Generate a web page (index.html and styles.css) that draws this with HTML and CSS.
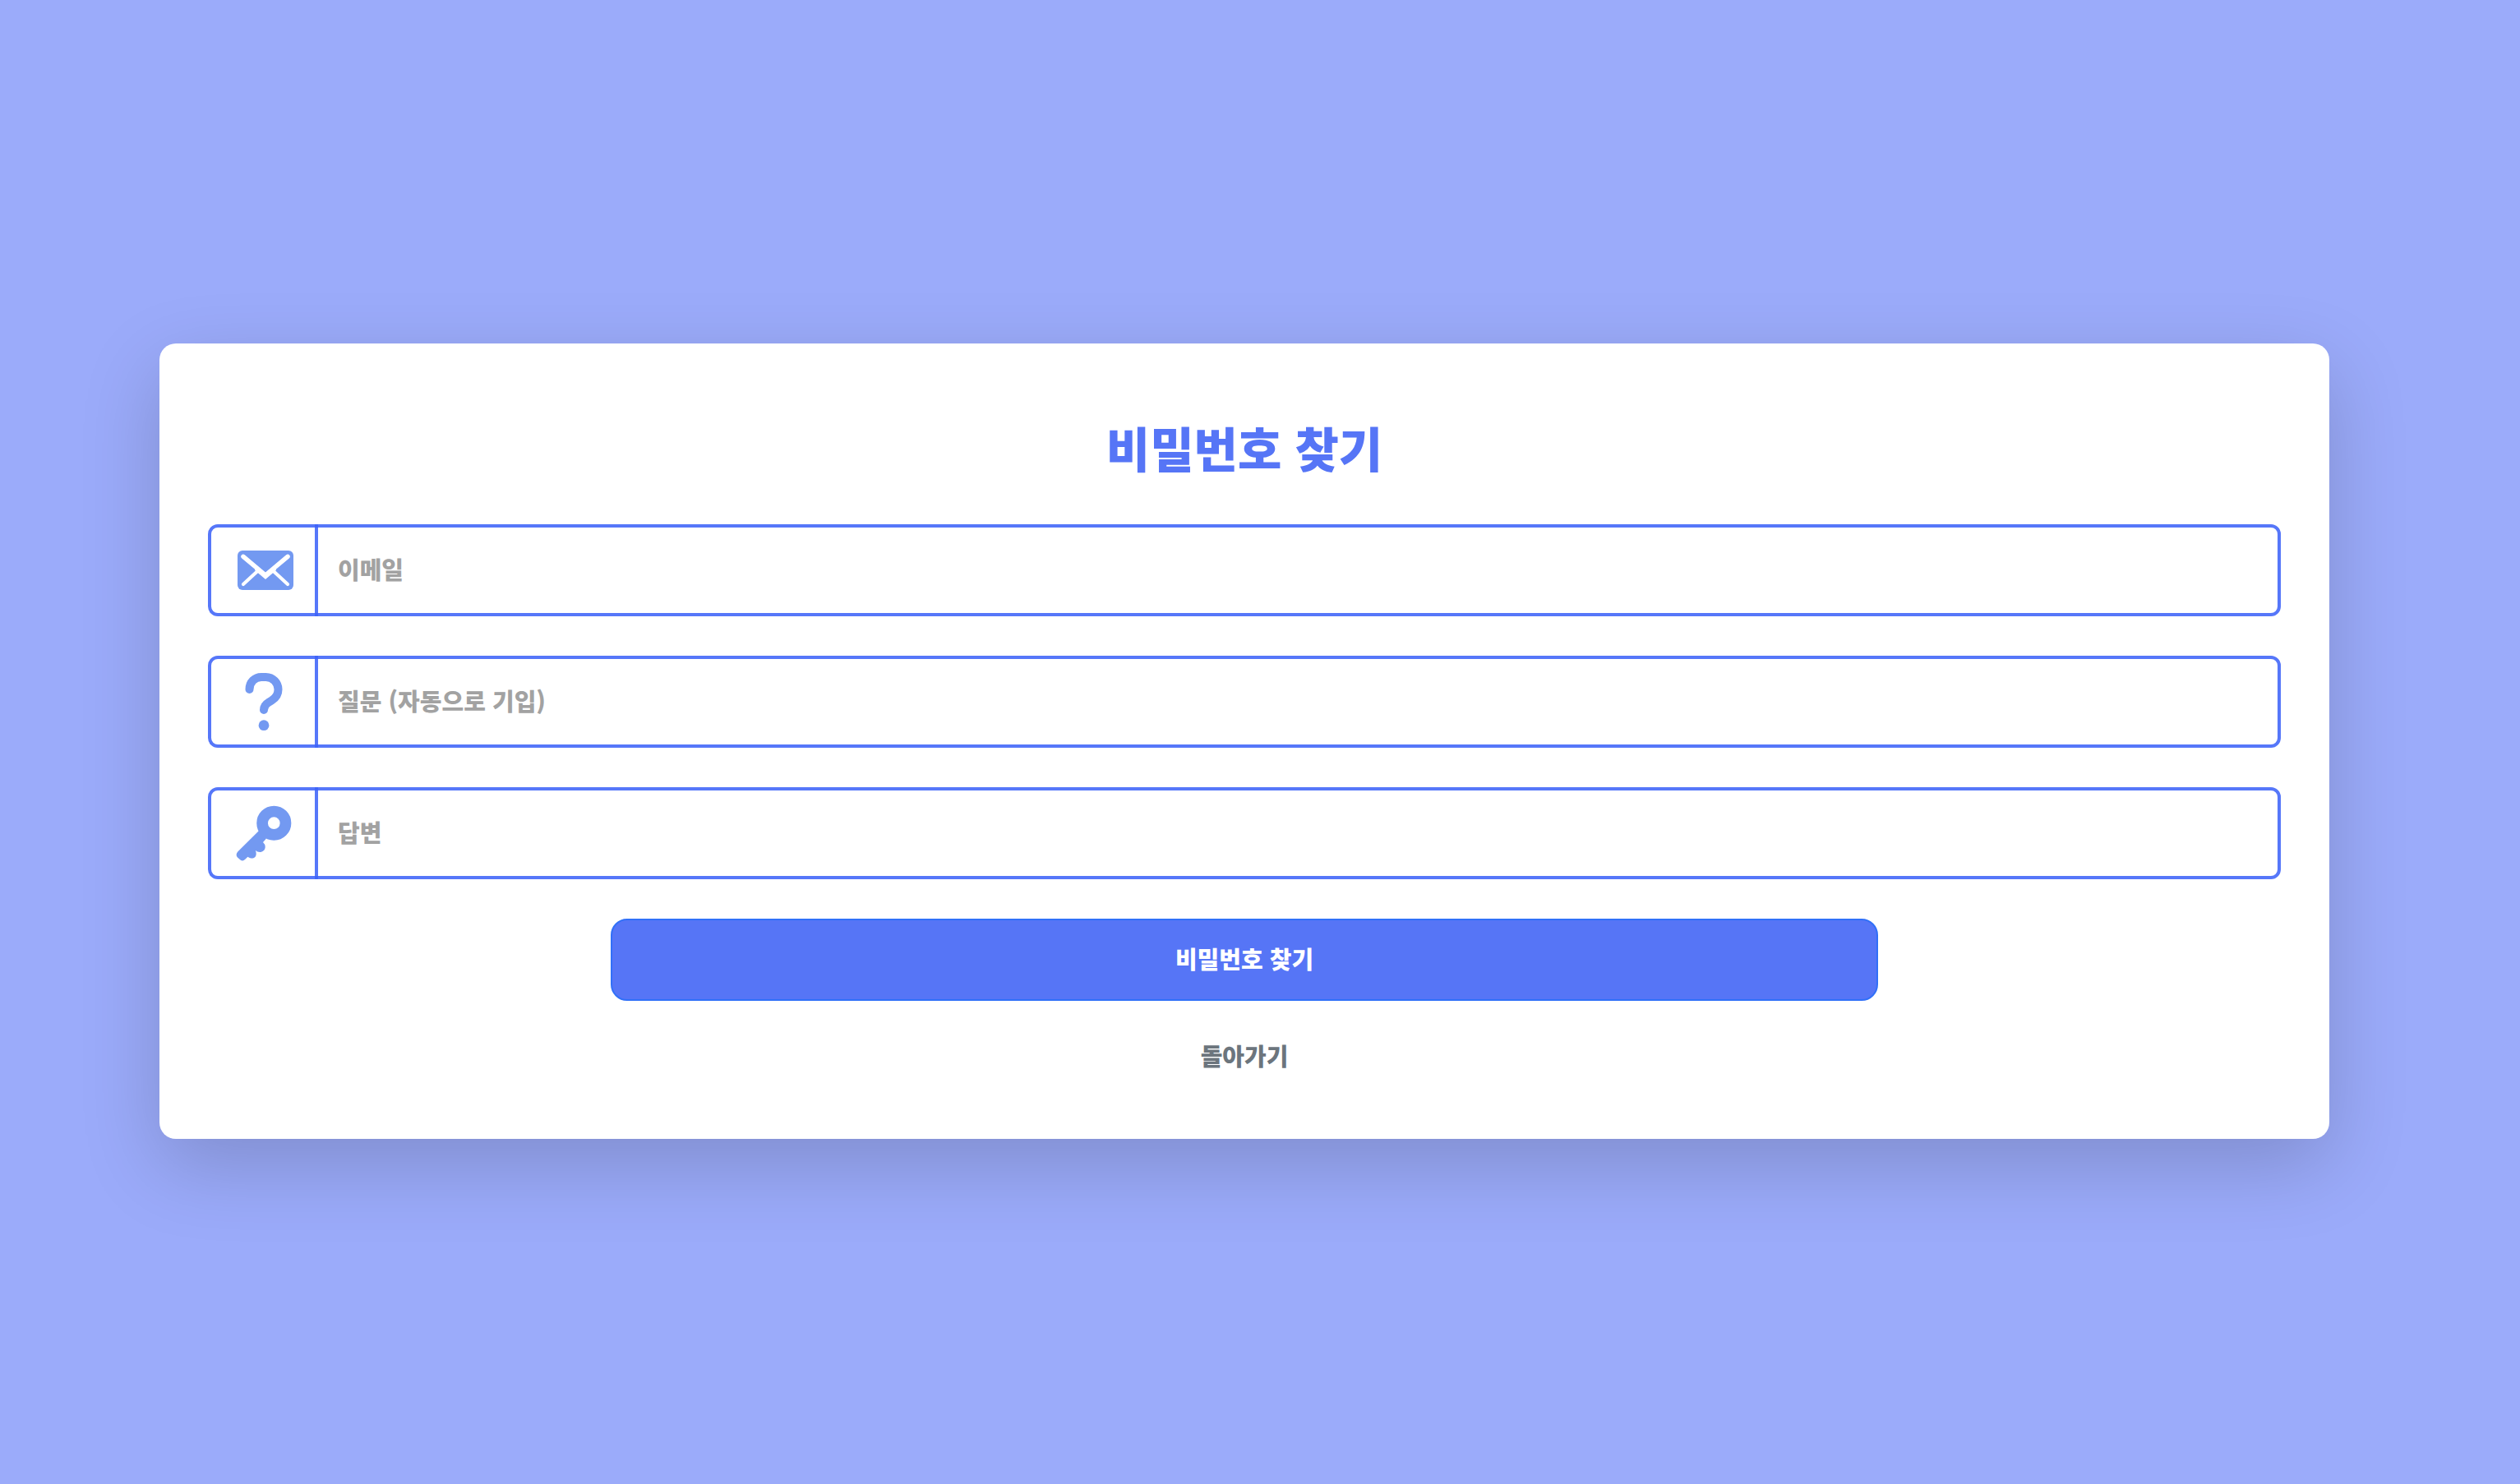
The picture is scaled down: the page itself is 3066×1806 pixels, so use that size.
FILE: index.html
```html
<!DOCTYPE html>
<html lang="ko">
<head>
  <meta charset="utf-8">
  <meta name="viewport" content="width=device-width, initial-scale=1">
  <title>비밀번호 찾기</title>
  <link rel="stylesheet" href="styles.css">
</head>
<body>
  <main class="card">
    <h1 class="title">비밀번호 찾기</h1>
    <form class="form">
      <div class="field">
        <label class="field-icon" for="email" aria-label="이메일">
          <svg class="icon" viewBox="0 0 80 80" aria-hidden="true">
            <rect x="9" y="16" width="68" height="48" rx="6" fill="currentColor"/>
            <g fill="none" stroke="#fff" stroke-linecap="round">
              <path d="M16 23.300 L43 46 L70 23.300" stroke-width="5.500" stroke-linejoin="miter"/>
              <path d="M33 39 L43 47.500 L53 39" stroke-width="5.500" stroke-linejoin="miter"/>
              <path d="M16 57 L35 39.500 M70 57 L51 39.500" stroke-width="4.200"/>
            </g>
          </svg>
        </label>
        <input class="field-input" id="email" type="email" placeholder="이메일">
      </div>
      <div class="field">
        <label class="field-icon" for="question" aria-label="질문">
          <svg class="icon" viewBox="0 0 80 80" aria-hidden="true">
            <path d="M23.500 25 C23.500 16 30 10 38 10 H43.500 C52 10 58.500 17 58.500 25 C58.500 31 55.500 35.500 50.500 38.500 L46.500 41 C43 43 41 46 41 50" fill="none" stroke="currentColor" stroke-width="10" stroke-linecap="round"/>
            <circle cx="41" cy="68.700" r="6.400" fill="currentColor"/>
          </svg>
        </label>
        <input class="field-input" id="question" type="text" placeholder="질문 (자동으로 기입)" readonly>
      </div>
      <div class="field">
        <label class="field-icon" for="answer" aria-label="답변">
          <svg class="icon" viewBox="0 0 80 80" aria-hidden="true">
            <circle cx="53.300" cy="27.700" r="14.200" fill="none" stroke="currentColor" stroke-width="13.700"/>
            <path d="M35 37 L9.500 62.300 Q6 66 9 69.500 L12.500 72.500 Q15.500 74.500 18 72 L21.500 68.700 C25 71.500 31.700 71.500 31.700 65 Q31.700 62.500 30.800 60.800 C35 65 42.700 63 42.700 56.500 Q42.700 53.500 40 51 L44 46.500 Z" fill="currentColor"/>
          </svg>
        </label>
        <input class="field-input" id="answer" type="text" placeholder="답변">
      </div>
      <button class="submit" type="submit">비밀번호 찾기</button>
    </form>
    <a class="back" href="#">돌아가기</a>
  </main>
</body>
</html>
```
FILE: styles.css
```css
* {
  box-sizing: border-box;
}

body {
  margin: 0;
  min-height: 100vh;
  padding: 0 38px 2px 0;
  display: flex;
  align-items: center;
  justify-content: center;
  background: #9babfa;
  font-family: "Noto Sans CJK KR", sans-serif;
  font-size: 29px;
  font-weight: 900;
  line-height: 40px;
}

.card {
  width: 100%;
  max-width: 2640px;
  padding: 94px 59px 82px;
  display: flex;
  flex-direction: column;
  align-items: center;
  border-radius: 20px;
  background: #fff;
  box-shadow: 0 32px 96px rgba(0, 0, 0, 0.175);
}

.title {
  margin: 0 0 62px;
  color: #5675f6;
  font-size: 58px;
  font-weight: 900;
  line-height: 64px;
}

.form {
  width: 100%;
  display: flex;
  flex-direction: column;
  align-items: center;
  gap: 48px;
}

.field {
  width: 100%;
  height: 112px;
  display: flex;
  border: 4px solid rgba(61, 99, 248, 0.87);
  border-radius: 12px;
}

.field-icon {
  width: 130px;
  margin: -4px 0;
  display: flex;
  flex-shrink: 0;
  align-items: center;
  justify-content: center;
  border-right: 4px solid rgba(61, 99, 248, 0.87);
  color: #7399f1;
}

.icon {
  width: 80px;
  height: 80px;
}

.field-input {
  flex: 1;
  min-width: 0;
  padding: 0 24px 4px;
  border: 0;
  outline: 0;
  background: transparent;
  color: #212529;
  font: inherit;
}

.field-input::placeholder {
  color: #a2a2a2;
  opacity: 1;
}

.submit {
  width: 100%;
  max-width: 1542px;
  height: 100px;
  padding: 0 24px 4px;
  border: 2px solid #3170f8;
  border-radius: 20px;
  background: #5675f6;
  color: #fff;
  font: inherit;
}

.back {
  margin-top: 46px;
  color: #6c757d;
  text-decoration: none;
}
```
